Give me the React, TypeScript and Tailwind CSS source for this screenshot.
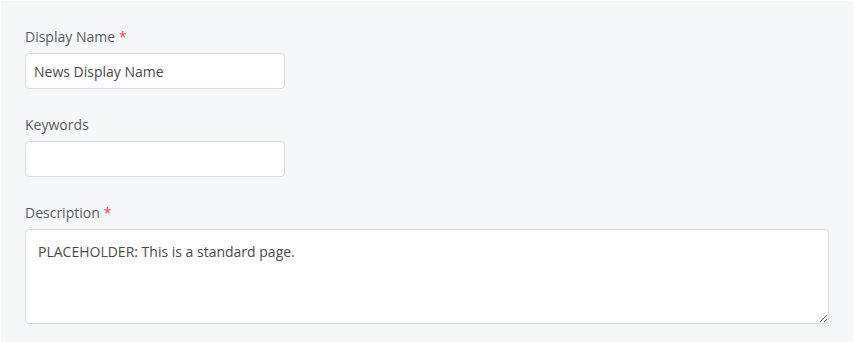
const font = { fontFamily: '"Open Sans", "Noto Sans", sans-serif' };

function Label({ text, required }: { text: string; required?: boolean }) {
  return (
    <label className="mb-1.5 block text-sm leading-5 text-[#585c63]">
      {text}
      {required && <span className="ml-1 text-[#e5484d]">*</span>}
    </label>
  );
}

export default function App() {
  return (
    <div className="h-[342px] w-[855px] bg-white" style={font}>
      <div className="ml-px mt-px flex h-[341px] w-[852px] flex-col gap-[26px] bg-[#f6f7f9] px-6 pt-[26px]">
        <div>
          <Label text="Display Name" required />
          <input
            className="h-9 w-[260px] rounded border border-[#d8dbe0] bg-white px-2 text-sm text-[#48494c] outline-none"
            defaultValue="News Display Name"
          />
        </div>
        <div>
          <Label text="Keywords" />
          <input className="h-9 w-[260px] rounded border border-[#d8dbe0] bg-white px-2 text-sm text-[#48494c] outline-none" />
        </div>
        <div>
          <Label text="Description" required />
          <textarea
            className="block h-[95px] w-[804px] rounded border border-[#d8dbe0] bg-white px-3 py-3 text-sm leading-5 text-[#48494c] outline-none"
            defaultValue="PLACEHOLDER: This is a standard page."
          />
        </div>
      </div>
    </div>
  );
}
